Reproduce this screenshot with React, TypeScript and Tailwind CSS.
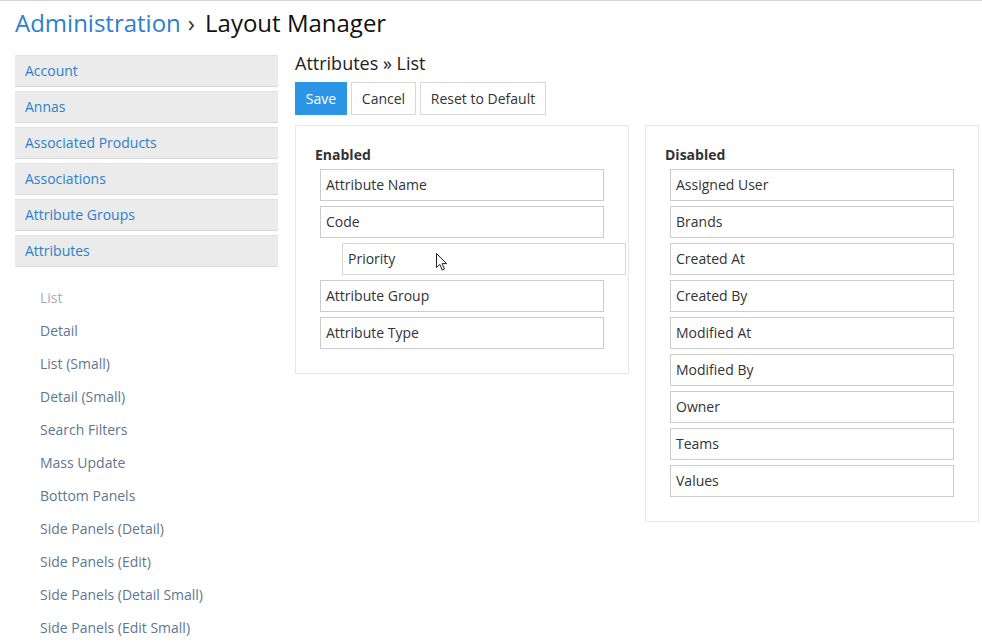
import React from 'react';

const SCOPES = [
  'Account',
  'Annas',
  'Associated Products',
  'Associations',
  'Attribute Groups',
  'Attributes',
];

const LAYOUTS = [
  'List',
  'Detail',
  'List (Small)',
  'Detail (Small)',
  'Search Filters',
  'Mass Update',
  'Bottom Panels',
  'Side Panels (Detail)',
  'Side Panels (Edit)',
  'Side Panels (Detail Small)',
  'Side Panels (Edit Small)',
];

const ENABLED = ['Attribute Name', 'Code', 'Priority', 'Attribute Group', 'Attribute Type'];

const DISABLED = [
  'Assigned User',
  'Brands',
  'Created At',
  'Created By',
  'Modified At',
  'Modified By',
  'Owner',
  'Teams',
  'Values',
];

const Cursor = () => (
  <svg
    width="14"
    height="20"
    viewBox="0 0 14 20"
    className="pointer-events-none absolute left-[92px] top-[8px]"
  >
    <path
      d="M1.5 1.5 L1.5 15.5 L4.8 12.4 L7.2 18 L9.4 17 L7.1 11.6 L11.6 11.6 Z"
      fill="#fff"
      stroke="#222"
      strokeWidth="1"
      strokeLinejoin="round"
    />
  </svg>
);

const FieldItem = ({ label, dragging }: { label: string; dragging?: boolean }) => (
  <li
    className={`relative box-border flex h-[32px] w-[284px] items-center border px-[5px] pb-[2px] text-[14px] text-[#333] ${
      dragging ? 'ml-[22px] border-[#d6d6d6] bg-white' : 'border-[#cccccc] bg-white'
    }`}
  >
    {label}
    {dragging && <Cursor />}
  </li>
);

const FieldPanel = ({ title, items }: { title: string; items: string[] }) => (
  <div className="box-border w-[334px] border border-[#e8e8e8] bg-white pb-[24px] pl-[19px] pt-[19px]">
    <div className="text-[14px] font-bold leading-[20px] text-[#333]">{title}</div>
    <ul className="mt-[4px] flex flex-col gap-[5px] pl-[5px]">
      {items.map((item) => (
        <FieldItem key={item} label={item} dragging={item === 'Priority'} />
      ))}
    </ul>
  </div>
);

export default function App() {
  return (
    <div
      className="min-h-[644px] w-[982px] border-t border-[#d4d4d4] bg-white"
      style={{ fontFamily: '"Open Sans", "Noto Sans", sans-serif' }}
    >
      {/* Page header */}
      <div className="px-[15px] pt-[7px] text-[24px] leading-[30px]">
        <span className="text-[#2d80cc]">Administration</span>
        <span className="ml-[7px] mr-[10px] text-[#333]">›</span>
        <span className="text-[#111]">Layout Manager</span>
      </div>

      <div className="mt-[17px] flex gap-[17px] pl-[15px]">
        {/* Sidebar */}
        <aside className="w-[263px]">
          <ul className="flex flex-col gap-[4px]">
            {SCOPES.map((scope) => (
              <li
                key={scope}
                className="box-border flex h-[32px] items-center border-b border-t border-b-[#d9d9d9] border-t-[#e2e2e2] bg-[#ebebeb] px-[10px] pb-[2px] text-[14px] text-[#2d80cc]"
              >
                {scope}
              </li>
            ))}
          </ul>
          <ul className="mt-[14px] pl-[25px]">
            {LAYOUTS.map((layout) => (
              <li
                key={layout}
                className={`text-[14px] leading-[33px] ${
                  layout === 'List' ? 'text-[#a3adb8]' : 'text-[#5e7790]'
                }`}
              >
                {layout}
              </li>
            ))}
          </ul>
        </aside>

        {/* Main */}
        <main className="flex-1">
          <div className="mt-[-2px] text-[18px] leading-[20px] text-[#222]">Attributes » List</div>
          <div className="mt-[9px] flex gap-[4px]">
            <button
              type="button"
              className="box-border h-[33px] w-[52px] border border-[#2d95e6] bg-[#2d95e6] text-[14px] text-white"
            >
              Save
            </button>
            <button
              type="button"
              className="box-border h-[33px] w-[65px] border border-[#d8d8d8] bg-white text-[14px] text-[#333]"
            >
              Cancel
            </button>
            <button
              type="button"
              className="box-border h-[33px] w-[126px] border border-[#d8d8d8] bg-white text-[14px] text-[#333]"
            >
              Reset to Default
            </button>
          </div>

          <div className="mt-[10px] flex items-start gap-[16px]">
            <FieldPanel title="Enabled" items={ENABLED} />
            <FieldPanel title="Disabled" items={DISABLED} />
          </div>
        </main>
      </div>
    </div>
  );
}
